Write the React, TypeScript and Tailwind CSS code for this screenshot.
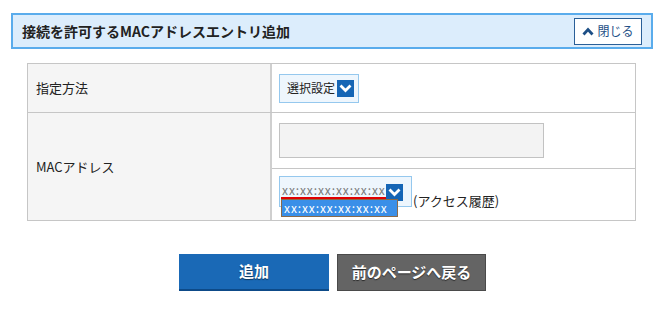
const font = { fontFamily: '"Noto Sans CJK JP", "Noto Sans", sans-serif' };

function DropIcon({ className = "" }: { className?: string }) {
  return (
    <span className={`flex h-[17px] w-[17px] items-center justify-center bg-[#1565b5] ${className}`}>
      <svg width="13" height="9" viewBox="0 0 13 9">
        <path d="M1.5 1.5 L6.5 6.5 L11.5 1.5" fill="none" stroke="#fff" strokeWidth="2.8" />
      </svg>
    </span>
  );
}

export default function App() {
  return (
    <div className="w-[664px] h-[311px] bg-white pt-[13px] text-[#222]" style={font}>
      <div className="mx-[11px] flex h-[36px] items-center justify-between border-2 border-[#5aacec] bg-[#dcedfc] pl-[9px] pr-[9px]">
        <h2 className="text-[14px] font-bold">接続を許可するMACアドレスエントリ追加</h2>
        <button className="flex h-[27px] w-[68px] items-center justify-center gap-[3px] border border-[#2a5f98] bg-white text-[12px] text-[#1d4f86]">
          <svg width="12" height="9" viewBox="0 0 12 9">
            <path d="M1.5 7.5 L6 2.5 L10.5 7.5" fill="none" stroke="#1d4f86" strokeWidth="2.8" />
          </svg>
          閉じる
        </button>
      </div>

      <div className="ml-[27px] mt-[14px] w-[609px] border border-[#c6c6c6] text-[13px]">
        <div className="grid grid-cols-[244px_1fr] border-b border-[#c6c6c6]">
          <div className="flex h-[48px] items-center border-r-2 border-[#cfcfcf] bg-[#f5f5f5] pl-[8px]">指定方法</div>
          <div className="flex items-center pl-[7px]">
            <div className="flex h-[29px] w-[80px] items-center justify-between border border-[#95c8ee] bg-[#eef6fd] pl-[7px] pr-[4px] text-[12px]">
              <span>選択設定</span>
              <DropIcon />
            </div>
          </div>
        </div>
        <div className="grid grid-cols-[244px_1fr]">
          <div className="flex items-center border-r-2 border-[#cfcfcf] bg-[#f5f5f5] pl-[8px]">MACアドレス</div>
          <div className="flex flex-col">
            <div className="h-[56px] border-b border-[#c6c6c6] pl-[7px] pt-[10px]">
              <div className="h-[35px] w-[265px] border border-[#c2c2c2] bg-[#f3f3f3]" />
            </div>
            <div className="flex h-[51px] items-start pl-[7px] pt-[7px]">
              <div className="relative flex h-[31px] w-[133px] items-start border border-[#95c8ee] bg-[#eef6fd] pl-[1px] pt-[6px]">
                <span className="border-b-2 border-[#e00000] pb-[1px] pl-[1px] text-[12px] leading-[13px] tracking-[0.9px] text-[#7a7a7a]">xx:xx:xx:xx:xx:xx</span>
                <DropIcon className="mt-[1px]" />
                <div className="absolute left-[1px] top-[22px] flex h-[18px] w-[117px] items-center border border-[#8a6a4a] bg-[#3a8fe8] pl-[2px] text-[12px] tracking-[0.9px] text-white">
                  xx:xx:xx:xx:xx:xx
                </div>
              </div>
              <span className="ml-[1px] mt-[15px] text-[13px]">(アクセス履歴)</span>
            </div>
          </div>
        </div>
      </div>

      <div className="mt-[33px] flex justify-center gap-[8px] pl-px">
        <button className="h-[37px] w-[150px] border-b-2 border-[#0d4a88] bg-[#1a69b6] text-[15px] font-bold text-white [text-shadow:0_1px_1px_rgba(0,0,0,0.5)]">追加</button>
        <button className="h-[37px] w-[149px] border border-[#4a4a4a] bg-[#646464] text-[15px] font-bold text-white [text-shadow:0_1px_1px_rgba(0,0,0,0.6)]">前のページへ戻る</button>
      </div>
    </div>
  );
}
